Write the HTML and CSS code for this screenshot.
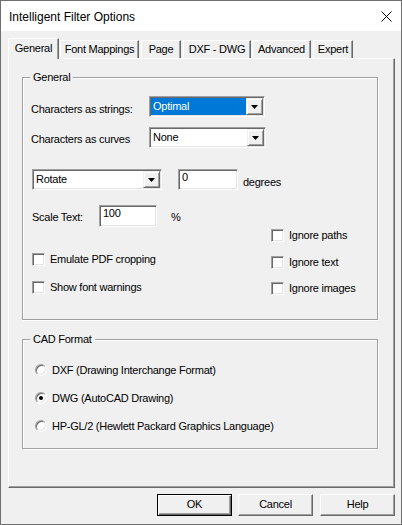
FILE: index.html
```html
<!DOCTYPE html>
<html>
<head>
<meta charset="utf-8">
<link rel="stylesheet" href="styles.css">
</head>
<body>
<div class="window">
  <div class="titlebar">
    <span class="title">Intelligent Filter Options</span>
    <svg class="close" width="11" height="11" viewBox="0 0 11 11"><path d="M0.5 0.5L10.5 10.5M10.5 0.5L0.5 10.5" stroke="#000" stroke-width="1"/></svg>
  </div>
  <div class="client">
    <div class="tabs">
      <div class="tab active t-general">General</div>
      <div class="tab t-fm">Font Mappings</div>
      <div class="tab t-page">Page</div>
      <div class="tab t-dxf">DXF - DWG</div>
      <div class="tab t-adv">Advanced</div>
      <div class="tab t-exp">Expert</div>
    </div>
    <div class="panel">
      <div class="group group-general">
        <div class="group-label">General</div>
        <div class="row row-1">
          <span class="row-label">Characters as strings:</span>
          <div class="combo combo-a">
            <span class="combo-value selected">Optimal</span>
            <span class="combo-btn"><svg width="7" height="4" viewBox="0 0 7 4"><path d="M0 0H7L3.5 4Z" fill="#000"/></svg></span>
          </div>
        </div>
        <div class="row row-2">
          <span class="row-label">Characters as curves</span>
          <div class="combo combo-b">
            <span class="combo-value">None</span>
            <span class="combo-btn"><svg width="7" height="4" viewBox="0 0 7 4"><path d="M0 0H7L3.5 4Z" fill="#000"/></svg></span>
          </div>
        </div>
        <div class="row row-3">
          <div class="combo combo-rotate">
            <span class="combo-value">Rotate</span>
            <span class="combo-btn"><svg width="7" height="4" viewBox="0 0 7 4"><path d="M0 0H7L3.5 4Z" fill="#000"/></svg></span>
          </div>
          <div class="field field-deg">0</div>
          <span class="unit-deg">degrees</span>
        </div>
        <div class="bottom">
          <div class="left-col">
            <div class="scale-row">
              <span class="scale-label">Scale Text:</span>
              <div class="field field-scale">100</div>
              <span class="pct">%</span>
            </div>
            <div class="check check-emulate"><span class="box"></span><span class="check-text">Emulate PDF cropping</span></div>
            <div class="check check-show"><span class="box"></span><span class="check-text">Show font warnings</span></div>
          </div>
          <div class="right-col">
            <div class="check check-paths"><span class="box"></span><span class="check-text">Ignore paths</span></div>
            <div class="check check-text-item"><span class="box"></span><span class="check-text">Ignore text</span></div>
            <div class="check check-images"><span class="box"></span><span class="check-text">Ignore images</span></div>
          </div>
        </div>
      </div>
      <div class="group group-cad">
        <div class="group-label">CAD Format</div>
        <div class="radio radio-first"><span class="circle"></span><span class="radio-text">DXF (Drawing Interchange Format)</span></div>
        <div class="radio"><span class="circle checked"><span class="dot"></span></span><span class="radio-text">DWG (AutoCAD Drawing)</span></div>
        <div class="radio"><span class="circle"></span><span class="radio-text">HP-GL/2 (Hewlett Packard Graphics Language)</span></div>
      </div>
    </div>
    <div class="buttons">
      <div class="btn btn-default">OK</div>
      <div class="btn btn-cancel">Cancel</div>
      <div class="btn">Help</div>
    </div>
  </div>
</div>
</body>
</html>
```

FILE: styles.css
```css
* { box-sizing: border-box; }
html, body { margin: 0; padding: 0; }
body {
  background: #f0f0f0;
  font-family: "Liberation Sans", Arial, sans-serif;
  font-size: 11px;
  letter-spacing: -0.25px;
  line-height: 13px;
  color: #000;
}
.window {
  width: 402px;
  height: 525px;
  border: 1px solid #6f6f6f;
  background: #f0f0f0;
  display: flex;
  flex-direction: column;
}
.titlebar {
  height: 30px;
  flex: none;
  background: #fff;
  display: flex;
  align-items: center;
  justify-content: space-between;
  padding: 0 9px 0 8px;
}
.title {
  font-size: 12px;
  letter-spacing: 0;
  line-height: 16px;
  padding-top: 1px;
}
.close { display: block; margin-top: 1px; }
.client {
  flex: 1;
  padding: 7px 0 0 7px;
}
.tabs {
  display: flex;
  align-items: flex-end;
  height: 20px;
}
.tab {
  height: 18px;
  border-top: 1px solid #fff;
  border-left: 1px solid #fff;
  border-right: 1px solid #696969;
  box-shadow: inset -1px 0 #a0a0a0;
  text-align: center;
  padding-top: 2px;
  white-space: nowrap;
}
.tab.active {
  height: 21px;
  margin-bottom: -1px;
  position: relative;
  z-index: 1;
  background: #f0f0f0;
  padding-top: 3px;
}
.t-general { width: 51px; }
.t-fm { width: 79px; margin-left: 1px; }
.t-page { width: 40px; margin-left: 2px; }
.t-dxf { width: 68px; margin-left: 2px; }
.t-adv { width: 59px; margin-left: 1px; }
.t-exp { width: 40px; margin-left: 2px; }

.panel {
  width: 387px;
  height: 430px;
  border-top: 1px solid #fff;
  border-left: 1px solid #fff;
  border-right: 1px solid #696969;
  border-bottom: 1px solid #696969;
  box-shadow: inset -1px -1px #a0a0a0;
  padding: 18px 0 0 13px;
}
.group {
  position: relative;
  width: 356px;
  border: 1px solid #a0a0a0;
  box-shadow: inset 1px 1px #fff, 1px 1px #fff;
}
.group-general { height: 243px; padding-left: 8px; }
.group-cad { height: 110px; margin-top: 19px; padding-left: 12px; }
.group-label {
  position: absolute;
  top: -7px;
  left: 7px;
  padding: 0 3px;
  background: #f0f0f0;
  line-height: 13px;
}

.row { display: flex; align-items: flex-start; }
.row-1 { margin-top: 18px; }
.row-2 { margin-top: 10px; }
.row-label { width: 118px; margin-top: 7px; }
.row-2 .row-label { margin-top: 6px; }

.combo {
  display: flex;
  height: 21px;
  border: 1px solid;
  border-color: #a0a0a0 #fff #fff #a0a0a0;
  box-shadow: inset 1px 1px #696969, inset -1px -1px #e3e3e3;
  background: #fff;
  padding: 1px;
}
.combo-a { width: 116px; }
.combo-b { width: 117px; }
.combo-rotate { width: 130px; }
.combo-value {
  flex: 1;
  line-height: 17px;
  padding-left: 2px;
  white-space: nowrap;
}
.combo-value.selected { background: #0078d7; color: #fff; }
.combo-btn {
  width: 17px;
  height: 17px;
  flex: none;
  background: #f0f0f0;
  border: 1px solid;
  border-color: #f0f0f0 #696969 #696969 #f0f0f0;
  box-shadow: inset 1px 1px #fff, inset -1px -1px #a0a0a0;
  display: flex;
  align-items: center;
  justify-content: center;
  padding-top: 1px;
}
.combo-btn svg { display: block; }

.row-3 { margin-top: 21px; margin-left: 1px; }
.field {
  height: 21px;
  border: 1px solid;
  border-color: #a0a0a0 #fff #fff #a0a0a0;
  box-shadow: inset 1px 1px #696969, inset -1px -1px #e3e3e3;
  background: #fff;
  padding: 1px 1px 1px 3px;
  line-height: 13px;
}
.field-deg { width: 60px; margin-left: 16px; }
.unit-deg { margin-left: 5px; margin-top: 7px; }

.bottom { display: flex; margin-top: 15px; margin-left: 1px; }
.left-col { width: 239px; }
.scale-row { display: flex; align-items: flex-start; height: 22px; }
.scale-label { width: 67px; margin-top: 6px; }
.field-scale { width: 58px; height: 22px; }
.pct { margin-left: 14px; margin-top: 6px; }

.check { display: flex; align-items: center; height: 13px; }
.box {
  width: 13px;
  height: 13px;
  flex: none;
  border: 1px solid;
  border-color: #a0a0a0 #fff #fff #a0a0a0;
  box-shadow: inset 1px 1px #696969, inset -1px -1px #e3e3e3;
  background: #fff;
}
.check-text { margin-left: 5px; white-space: nowrap; }
.check-emulate { margin-top: 26px; }
.check-show { margin-top: 15px; }
.right-col { margin-top: 24px; }
.check-text-item { margin-top: 14px; }
.check-images { margin-top: 13px; }

.radio { display: flex; align-items: center; height: 12px; margin-top: 16px; }
.radio-first { margin-top: 24px; }
.circle {
  width: 12px;
  height: 12px;
  flex: none;
  border-radius: 50%;
  border: 1px solid;
  border-color: #a0a0a0 #fff #fff #a0a0a0;
  box-shadow: inset 1px 1px #696969, inset -1px -1px #e3e3e3;
  background: #fff;
  display: flex;
  align-items: center;
  justify-content: center;
}
.dot { width: 4px; height: 4px; border-radius: 50%; background: #000; }
.radio-text { margin-left: 5px; white-space: nowrap; }

.buttons {
  display: flex;
  justify-content: flex-end;
  margin-top: 6px;
  padding-right: 6px;
}
.btn {
  width: 75px;
  height: 22px;
  margin-left: 7px;
  border: 1px solid;
  border-color: #fff #696969 #696969 #fff;
  box-shadow: inset -1px -1px #a0a0a0;
  background: #f0f0f0;
  text-align: center;
  line-height: 19px;
}
.btn-default {
  margin-left: 0;
  border-color: #000;
  box-shadow: inset 1px 1px #fff, inset -1px -1px #696969, inset -2px -2px #a0a0a0;
}
.btn-cancel { margin-left: 6px; }
```
